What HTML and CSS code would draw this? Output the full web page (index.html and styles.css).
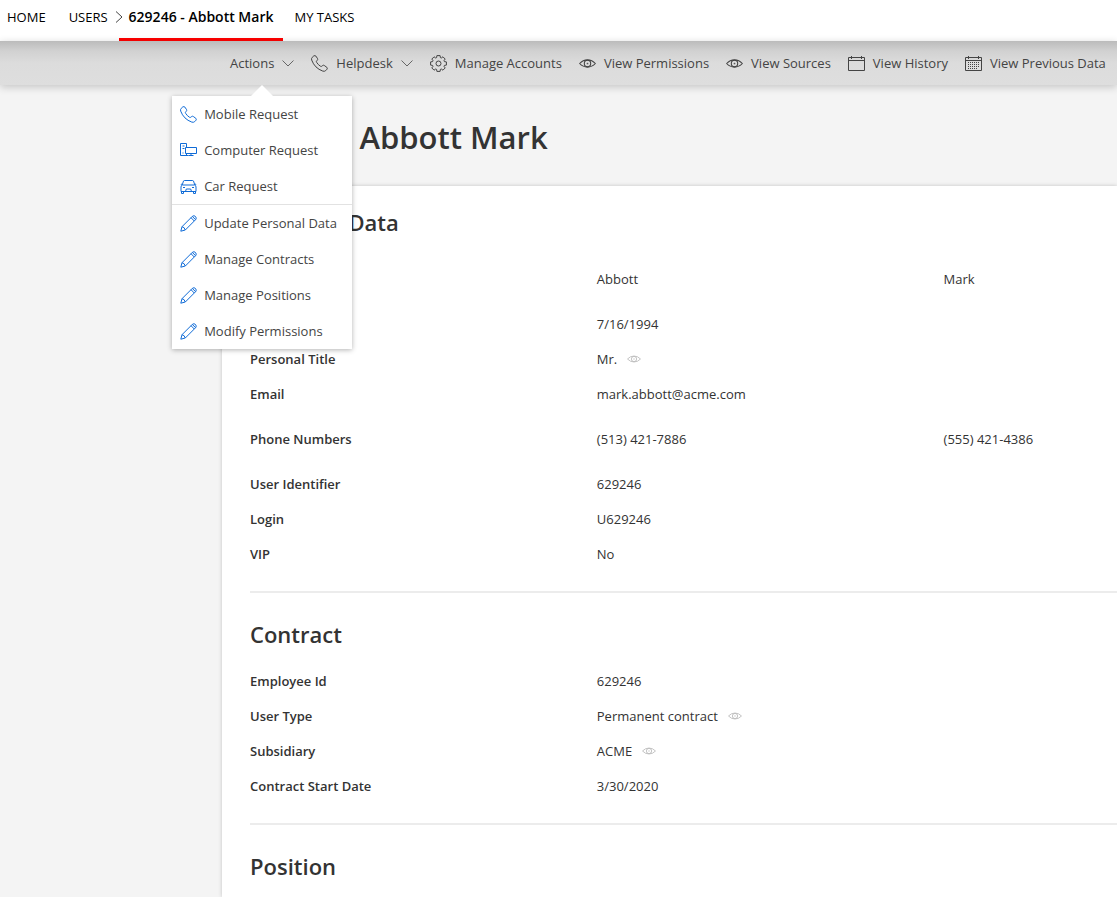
FILE: index.html
```html
<!DOCTYPE html>
<html lang="en">
<head>
<meta charset="utf-8">
<meta name="viewport" content="width=device-width, initial-scale=1">
<title>629246 - Abbott Mark</title>
<link rel="stylesheet" href="styles.css">
</head>
<body>
<svg class="sprite" aria-hidden="true">
  <symbol id="phone" viewBox="0 0 17 17"><path d="M1.2 2.4 2.8.9Q4 .2 4.9 1.1L6.6 3.7Q7 4.6 6.2 5.3L5.4 6.3Q5.3 6.9 5.8 7.6 7.3 9.9 9.4 11.2 10.1 11.7 10.7 11.3L11.7 10.5Q12.5 9.9 13.3 10.5L15.8 12.3Q16.7 13.2 16 14.2L14.7 15.6Q13.5 16.7 11.8 16.1 3.7 13.2.7 5.1.1 3.5 1.2 2.4Z"/></symbol>
  <symbol id="gear" viewBox="0 0 17 17"><path stroke-linejoin="round" d="M6.900.6 10.100.6 10.400 2.600 11.300 3 12.950 1.800 15.200 4.050 14 5.700 14.400 6.600 16.400 6.900V10.100L14.400 10.400 14 11.300 15.200 12.950 12.950 15.200 11.300 14 10.400 14.400 10.100 16.400H6.900L6.600 14.400 5.700 14 4.050 15.200 1.800 12.950 3 11.300 2.600 10.400.6 10.100V6.900L2.600 6.600 3 5.700 1.800 4.050 4.050 1.800 5.700 3 6.600 2.600Z"/><circle cx="8.5" cy="8.5" r="2.500"/></symbol>
  <symbol id="eye" viewBox="0 0 16 16"><path d="M.6 8Q3.700 4.600 8 4.600T15.400 8Q12.300 11.400 8 11.400T.6 8Z"/><circle cx="8" cy="8" r="3"/><circle cx="8" cy="8" r=".3"/></symbol>
  <symbol id="calendar" viewBox="0 0 17 17"><path d="M.5 2.500h16v13H.5ZM.5 5.500h16M3.500 1v3M13.500 1v3"/></symbol>
  <symbol id="schedule" viewBox="0 0 17 17"><path d="M.5 2.500h16v13H.5ZM.5 5.500h16M3.500 1v3M13.500 1v3"/><path d="M3 7.500h12M3 9.500h12M3 11.500h12M3 13.500h9" stroke-dasharray="1 1"/></symbol>
  <symbol id="computer" viewBox="0 0 17 17"><path d="M6.500 5V1.500h-6v12h8M2.500 4h2M2.500 6.500h2M2.500 11h1M5.500 5.500h11v6h-11ZM6.500 11.500v2M11 11.500v2M8.500 13.500h5"/></symbol>
  <symbol id="car" viewBox="0 0 17 17"><path d="M2.200 7 3.500 3Q3.700 2.500 4.500 2.500h8Q13.300 2.500 13.500 3L14.800 7M.8 6.500 2 6M16.200 6.500 15 6M2.200 7h12.600Q16 7.500 16 9v4.500H1V9Q1 7.500 2.200 7ZM1.500 13.500v2h2v-2M13.500 13.500v2h2v-2M3 9.500h2M12 9.500h2M5.500 13.500l.8-2.500h4.400l.8 2.500"/></symbol>
  <symbol id="pencil" viewBox="0 0 17 17"><path d="M.8 16.200 2 11.700 12.300 1.400Q14-.1 15.500 1.500T15.600 4.700L5.300 15ZM2 11.700Q4.500 12 5.300 15M11 2.700 14.300 6M12.300 1.400 15.600 4.700"/></symbol>
  <symbol id="down" viewBox="0 0 12 12"><path d="M.5 3.500 6 9l5.500-5.500"/></symbol>
  <symbol id="right" viewBox="0 0 8 14"><path d="M1 1.500 7 7l-6 5.500"/></symbol>
</svg>

<nav class="tabs" aria-label="Main">
  <a class="tab" href="#home">HOME</a>
  <a class="tab" href="#users">USERS</a>
  <a class="tab tab-current" href="#user" aria-current="page"><svg class="tab-arrow"><use href="#right"/></svg>629246 - Abbott Mark</a>
  <a class="tab" href="#tasks">MY TASKS</a>
</nav>

<div class="toolbar">
  <div class="dropdown">
    <button class="tool" type="button" aria-expanded="true">Actions <svg class="chevron"><use href="#down"/></svg></button>
    <div class="menu">
      <button class="menu-item" type="button"><svg class="icon"><use href="#phone"/></svg>Mobile Request</button>
      <button class="menu-item" type="button"><svg class="icon"><use href="#computer"/></svg>Computer Request</button>
      <button class="menu-item" type="button"><svg class="icon"><use href="#car"/></svg>Car Request</button>
      <hr class="menu-line">
      <button class="menu-item" type="button"><svg class="icon"><use href="#pencil"/></svg>Update Personal Data</button>
      <button class="menu-item" type="button"><svg class="icon"><use href="#pencil"/></svg>Manage Contracts</button>
      <button class="menu-item" type="button"><svg class="icon"><use href="#pencil"/></svg>Manage Positions</button>
      <button class="menu-item" type="button"><svg class="icon"><use href="#pencil"/></svg>Modify Permissions</button>
    </div>
  </div>
  <button class="tool" type="button"><svg class="icon"><use href="#phone"/></svg>Helpdesk <svg class="chevron"><use href="#down"/></svg></button>
  <button class="tool" type="button"><svg class="icon"><use href="#gear"/></svg>Manage Accounts</button>
  <button class="tool" type="button"><svg class="icon"><use href="#eye"/></svg>View Permissions</button>
  <button class="tool" type="button"><svg class="icon"><use href="#eye"/></svg>View Sources</button>
  <button class="tool" type="button"><svg class="icon"><use href="#calendar"/></svg>View History</button>
  <button class="tool" type="button"><svg class="icon"><use href="#schedule"/></svg>View Previous Data</button>
</div>

<main class="page">
  <h1 class="title">629246 - Abbott Mark</h1>
  <div class="card">
    <section class="section">
      <h2 class="heading">Personal Data</h2>
      <dl class="fields">
        <div class="row row-tall"><dt>Name</dt><dd>Abbott</dd><dd>Mark</dd></div>
        <div class="row"><dt>Birth Date</dt><dd>7/16/1994</dd></div>
        <div class="row"><dt>Personal Title</dt><dd>Mr. <svg class="peek"><use href="#eye"/></svg></dd></div>
        <div class="row"><dt>Email</dt><dd>mark.abbott@acme.com</dd></div>
        <div class="row row-tall"><dt>Phone Numbers</dt><dd>(513) 421-7886</dd><dd>(555) 421-4386</dd></div>
        <div class="row"><dt>User Identifier</dt><dd>629246</dd></div>
        <div class="row"><dt>Login</dt><dd>U629246</dd></div>
        <div class="row"><dt>VIP</dt><dd>No</dd></div>
      </dl>
    </section>
    <section class="section">
      <h2 class="heading">Contract</h2>
      <dl class="fields">
        <div class="row"><dt>Employee Id</dt><dd>629246</dd></div>
        <div class="row"><dt>User Type</dt><dd>Permanent contract <svg class="peek"><use href="#eye"/></svg></dd></div>
        <div class="row"><dt>Subsidiary</dt><dd>ACME <svg class="peek"><use href="#eye"/></svg></dd></div>
        <div class="row"><dt>Contract Start Date</dt><dd>3/30/2020</dd></div>
      </dl>
    </section>
    <section class="section">
      <h2 class="heading">Position</h2>
    </section>
  </div>
</main>
</body>
</html>
```
FILE: styles.css
```css
* { box-sizing: border-box; }

body {
  margin: 0;
  min-height: 100vh;
  display: flex;
  flex-direction: column;
  background: #f4f4f4;
  color: #333;
  font: 13px/20px "Segoe UI", "Open Sans", "Noto Sans", sans-serif;
}

button {
  border: 0;
  padding: 0;
  background: none;
  color: inherit;
  font: inherit;
  white-space: nowrap;
  cursor: pointer;
}

svg {
  flex: none;
  fill: none;
  stroke: currentColor;
}

.sprite { position: absolute; width: 0; height: 0; }

.tabs {
  display: flex;
  height: 41px;
  background: #fff;
}

.tab {
  position: relative;
  padding: 7px 11px 11px;
  border-bottom: 3px solid transparent;
  color: #000;
  text-decoration: none;
  white-space: nowrap;
}

.tab:first-child { padding: 7px 12px 11px 7px; }

.tab-current {
  padding: 7px 10px 11px;
  border-color: #f00;
  font-size: 14px;
  font-weight: 600;
}

.tab-arrow {
  position: absolute;
  left: -4px;
  top: 10px;
  width: 8px;
  height: 14px;
  color: #444;
}

.toolbar {
  position: relative;
  z-index: 1;
  display: flex;
  gap: 17px;
  height: 44px;
  padding-left: 230px;
  color: #444;
  background: linear-gradient(#bbb, #d1d1d1 10px, #dcdcdc 22px, #dedede);
  box-shadow: 0 2px 8px rgba(0, 0, 0, 0.2);
}

.dropdown { position: relative; display: flex; }

.tool {
  display: flex;
  align-items: center;
  gap: 8px;
}

.icon { width: 17px; height: 17px; }

.chevron { width: 12px; height: 12px; color: #666; }

.menu {
  position: absolute;
  top: 55px;
  left: 50%;
  width: 180px;
  margin-left: -90px;
  background: #fff;
  box-shadow: 0 1px 5px rgba(0, 0, 0, 0.3);
}

.menu::before {
  content: "";
  position: absolute;
  top: -11px;
  left: 50%;
  margin-left: -11px;
  border: 11px solid transparent;
  border-top: 0;
  border-bottom-color: #fff;
}

.menu-item {
  display: flex;
  align-items: center;
  gap: 7px;
  width: 100%;
  height: 36px;
  padding-left: 8px;
}

.menu-item .icon { color: #0f6bd7; }

.menu-line {
  height: 1px;
  margin: 0;
  border: 0;
  background: #e2e2e2;
}

.page {
  flex: 1;
  display: flex;
  flex-direction: column;
  padding-left: 222px;
}

.title {
  margin: 0;
  padding: 32px 0 29px 5px;
  font-size: 31px;
  font-weight: 600;
  line-height: 40px;
}

.card {
  flex: 1;
  background: #fff;
  box-shadow: 0 0 4px rgba(0, 0, 0, 0.2);
  padding: 16px 0 0 28px;
}

.section + .section {
  margin-top: 20px;
  border-top: 2px solid #ececec;
  padding-top: 21px;
}

.heading {
  margin: 0 0 9px;
  font-size: 22px;
  font-weight: 600;
  line-height: 40px;
}

.fields { margin: 0; }

.row {
  display: grid;
  grid-template-columns: 2fr 2fr 1fr;
  align-items: center;
  height: 35px;
}

.row-tall { height: 55px; }

dt { font-weight: 600; }

dd {
  display: flex;
  align-items: center;
  gap: 10px;
  margin: 0;
  white-space: nowrap;
}

.peek {
  width: 14px;
  height: 14px;
  color: #bbb;
}
```
